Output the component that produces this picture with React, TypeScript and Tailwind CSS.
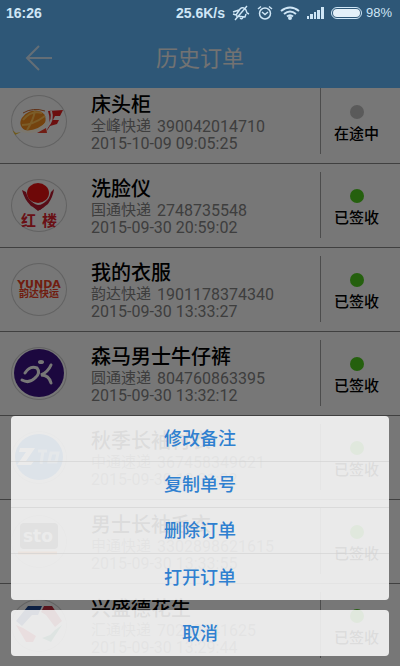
import React from "react";

type Order = {
  name: string;
  carrier: string;
  no: string;
  time: string;
  done: boolean;
  logo: React.ReactNode;
};

const QuanfengLogo = () => (
  <svg viewBox="0 0 56 53" className="h-full w-full" aria-hidden="true">
    <path d="M37 16 L52 15 L49 21 L44 21 L42 25 L48 25 L46 29 L39 31 L35 37 Q41 27 37 16 Z" fill="#d81e1e" />
    <path d="M40 16 Q43 25 36 32" stroke="#eee" strokeWidth="2" fill="none" />
    <ellipse cx="22" cy="26" rx="13" ry="10" transform="rotate(-22 22 26)" fill="#e8861c" />
    <path d="M12 25 Q20 15 31 18 M11 30 Q22 30 34 21 M16 35 Q22 26 24 16" stroke="#f6b850" strokeWidth="2" fill="none" />
    <path d="M8 34 Q24 39 36 26 L37 29 Q28 39 17 38 Q10 38 8 34 Z" fill="#f7efdc" />
    <path d="M1 35 L4 40 L10 37 L5 38 Z" fill="#e0b63a" />
    <path d="M12 18 Q22 12 34 16" stroke="#c0602a" strokeWidth="1" fill="none" />
    <path d="M26 38 L36 38 L35 33 Z" fill="#e03a28" />
  </svg>
);

const HonglouLogo = () => (
  <svg viewBox="0 0 56 53" className="h-full w-full" aria-hidden="true">
    <path d="M11 11 L15 13 Q17 21 23 25 L27 29 L33 25 Q38 21 40 13 L43 10 Q42 18 37 25 L29 31 L20 27 Q13 20 11 11 Z" fill="#b0182c" />
    <ellipse cx="27" cy="14" rx="11" ry="10" fill="#dc1010" />
    <path d="M18 20 L22 28 L27 32 L33 28 L37 20 Q32 26 27 26 Q22 25 18 20 Z" fill="#b0182c" />
    <text x="10" y="47" fontSize="15" fontWeight="700" fill="#d3202a" fontFamily="'Noto Sans CJK SC', sans-serif">红</text>
    <text x="31" y="47" fontSize="15" fontWeight="700" fill="#d3202a" fontFamily="'Noto Sans CJK SC', sans-serif">楼</text>
  </svg>
);

const YundaLogo = () => (
  <span className="flex h-full flex-col items-center justify-center font-bold text-[#e03a20]">
    <span className="font-['DejaVu_Sans'] text-[11px] leading-[9px]">YUNDA</span>
    <span className="text-[10px] leading-[10px]">韵达快运</span>
  </span>
);

const YuantongLogo = () => (
  <svg viewBox="0 0 56 53" className="h-full w-full" aria-hidden="true">
    <ellipse cx="28" cy="26" rx="25" ry="24" fill="#38107e" />
    <ellipse cx="30" cy="15" rx="3" ry="2" fill="#eee" />
    <path d="M14 26 Q19 18 26 21 Q30 26 24 31 Q18 37 11 33" stroke="#eee" strokeWidth="3" fill="none" strokeLinecap="round" />
    <path d="M40 18 Q37 25 30 28 Q38 28 40 36" stroke="#eee" strokeWidth="3" fill="none" strokeLinecap="round" />
  </svg>
);

const ZtoLogo = () => (
  <svg viewBox="0 0 56 53" className="h-full w-full" aria-hidden="true">
    <ellipse cx="28" cy="26" rx="24" ry="23" fill="#1673d8" />
    <path d="M9 17 H24 L15 30 H23 L20 34 H6 L15 21 H8 Z" fill="#fff" />
    <path d="M27 20 H36 M32 20 L30 33 M40 22 H47 L45 31 H38 Z" stroke="#9cc4ee" strokeWidth="3" fill="none" />
  </svg>
);

const StoLogo = () => (
  <svg viewBox="0 0 56 53" className="h-full w-full" aria-hidden="true">
    <rect x="9" y="8" width="38" height="26" rx="4" fill="#555" />
    <text x="12" y="27" fontSize="17" fontWeight="700" fill="#fff" fontFamily="'DejaVu Sans', sans-serif">sto</text>
    <path d="M7 38 H46" stroke="#f47a20" strokeWidth="3" />
  </svg>
);

const HuitongLogo = () => (
  <svg viewBox="0 0 56 53" className="h-full w-full" aria-hidden="true">
    <path d="M31 7 L17 7 L5 22 L11 27 L21 16 L27 16 Z" fill="#163f86" />
    <path d="M33 7 L41 7 L51 22 L44 28 L35 16 L30 13 Z" fill="#b02838" />
    <path d="M5 26 L15 43 L22 43 L25 37 L12 29 Z" fill="#dd2032" />
    <path d="M51 26 L40 43 L31 39 L39 36 L44 31 Z" fill="#2a8f6a" />
  </svg>
);

const orders: Order[] = [
  { name: "床头柜", carrier: "全峰快递", no: "390042014710", time: "2015-10-09 09:05:25", done: false, logo: <QuanfengLogo /> },
  { name: "洗脸仪", carrier: "国通快递", no: "2748735548", time: "2015-09-30 20:59:02", done: true, logo: <HonglouLogo /> },
  { name: "我的衣服", carrier: "韵达快递", no: "1901178374340", time: "2015-09-30 13:33:27", done: true, logo: <YundaLogo /> },
  { name: "森马男士牛仔裤", carrier: "圆通速递", no: "804760863395", time: "2015-09-30 13:32:12", done: true, logo: <YuantongLogo /> },
  { name: "秋季长袖衬衣", carrier: "中通速递", no: "367458349621", time: "2015-09-30 13:31:22", done: true, logo: <ZtoLogo /> },
  { name: "男士长袖毛衣", carrier: "申通快递", no: "3302898621615", time: "2015-09-30 13:33:55", done: true, logo: <StoLogo /> },
  { name: "兴盛德花生", carrier: "汇通快递", no: "70260341625", time: "2015-09-30 13:29:44", done: true, logo: <HuitongLogo /> },
];

const actions = ["修改备注", "复制单号", "删除订单", "打开订单"];

const StatusBar = () => (
  <div className="absolute inset-x-0 top-0 z-30 flex h-[26px] items-center justify-between pr-2 pl-1.5 text-[13px] text-[#cfe6f6]">
    <span className="font-['Liberation_Sans'] text-[14px] font-bold">16:26</span>
    <div className="flex items-center gap-[7px]">
      <span className="font-['Liberation_Sans'] text-[14px] font-bold">25.6K/s</span>
      <svg viewBox="0 0 18 16" className="h-4 w-[18px]" fill="none" stroke="currentColor" strokeWidth="1.4" aria-hidden="true">
        <path d="M4 10 L8 4 Q11 1 14 5 L15 8 L17 9 M4 10 L1 9 M4 11 L13 12 L14 9 M8 13 Q10 15 11 12 M15 1 L3 15 M1 7 L7 5" />
      </svg>
      <svg viewBox="0 0 16 16" className="h-4 w-4" fill="none" stroke="currentColor" strokeWidth="1.5" aria-hidden="true">
        <circle cx="8" cy="8.500" r="5.500" />
        <path d="M5 7 L8 9.500 L11 7 M1 4 L4 1.500 M12 1.500 L15 4" />
      </svg>
      <svg viewBox="0 0 20 14" className="h-[14px] w-5" fill="none" stroke="currentColor" strokeWidth="2" aria-hidden="true">
        <path d="M1 5 Q10 -2 19 5 M4 8 Q10 3 16 8 M7 10.500 Q10 8 13 10.500" />
        <circle cx="10" cy="12" r="1" fill="currentColor" />
      </svg>
      <svg viewBox="0 0 17 13" className="h-[13px] w-[17px]" fill="currentColor" aria-hidden="true">
        <path d="M0 9h2v3H0zM3 7h3v5H3zM7 5h2v7H7zM10 3h3v9h-3zM14 0h3v12h-3z" />
      </svg>
      <div className="flex items-center gap-1">
        <span className="flex h-3 w-[31px] rounded-full border border-current p-px">
          <span className="w-full rounded-full bg-[#e4f0f8]" />
        </span>
        <span className="font-['Liberation_Sans']">98%</span>
      </div>
    </div>
  </div>
);

const Row = ({ order }: { order: Order }) => (
  <li className="flex h-[84px] border-b border-[#808080] pl-[11px]">
    <div className="mt-[15px] h-[53px] w-14 shrink-0 overflow-hidden rounded-[50%] shadow-[inset_0_0_0_1px_#c4c4c4]">
      {order.logo}
    </div>
    <div className="min-w-0 flex-1 pt-3 pl-6 text-[#7c7c7c]">
      <h2 className="text-[20px] leading-[26px] font-medium text-black">{order.name}</h2>
      <p className="flex gap-1.5 leading-[17px] whitespace-nowrap">
        <span className="text-[15px]">{order.carrier}</span>
        <span className="text-[16px]">{order.no}</span>
      </p>
      <p className="text-[16px] leading-[17px]">{order.time}</p>
    </div>
    <div className="mt-2 mb-[9px] flex w-20 shrink-0 flex-col items-center border-l border-[#999] pt-[17px] pr-2">
      <span className={`h-[14px] w-[14px] rounded-full ${order.done ? "bg-[#4ac01c]" : "bg-[#b4b4b4]"}`} />
      <span className="mt-[5px] text-[15px] leading-5 font-medium text-black">{order.done ? "已签收" : "在途中"}</span>
    </div>
  </li>
);

export default function App() {
  return (
    <div className="relative h-screen overflow-hidden bg-[#eee] font-[Roboto,'Noto_Sans_CJK_SC',sans-serif]">
      <StatusBar />
      <header className="relative z-10 grid h-[88px] grid-cols-[80px_1fr_80px] items-center bg-[#5caeee] pt-7">
        <button type="button" aria-label="返回" className="pl-6">
          <svg viewBox="0 0 28 26" className="h-[26px] w-7" fill="none" stroke="#c8dcec" strokeWidth="2" aria-hidden="true">
            <path d="M28 13 H3 M15 1 L3 13 L15 25" />
          </svg>
        </button>
        <h1 className="text-center text-[22px] text-[#e4e4e4]">历史订单</h1>
      </header>
      <ul className="-mt-2">
        {orders.map((o) => (
          <Row key={o.no} order={o} />
        ))}
      </ul>

      <div className="absolute inset-0 z-20 flex flex-col justify-end gap-[10px] bg-black/50 px-[11px] pb-[10px]">
        <div role="menu" className="divide-y divide-[#cfcfcf]/60 overflow-hidden rounded bg-[#fbfbfb]/88">
          {actions.map((a) => (
            <button key={a} type="button" role="menuitem" className="block h-[46px] w-full text-[18px] font-medium text-[#2f80d0]">
              {a}
            </button>
          ))}
        </div>
        <button type="button" className="h-[46px] rounded bg-[#fbfbfb]/88 text-[18px] font-medium text-[#2f80d0]">
          取消
        </button>
      </div>
    </div>
  );
}
